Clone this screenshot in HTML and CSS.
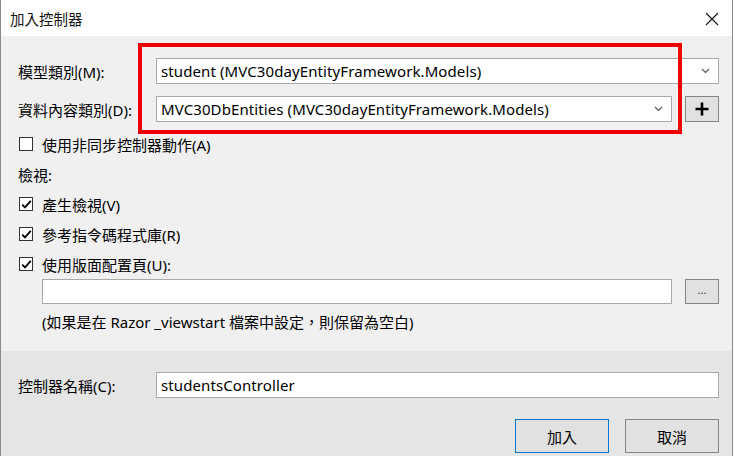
FILE: index.html
```html
<!DOCTYPE html>
<html lang="zh-Hant">
<head>
<meta charset="utf-8">
<title>加入控制器</title>
<link rel="stylesheet" href="styles.css">
</head>
<body>
<div class="window">
  <div class="titlebar">
    <span class="title">加入控制器</span>
    <svg class="close" width="14" height="14" viewBox="0 0 14 14"><path d="M1 1 L13 13 M13 1 L1 13" stroke="#111" stroke-width="1.1" fill="none"/></svg>
  </div>
  <div class="main">
    <div class="row">
      <label class="lbl">模型類別(M):</label>
      <div class="combo wide"><span class="val">student (MVC30dayEntityFramework.Models)</span><svg class="chev" width="9" height="6" viewBox="0 0 9 6"><path d="M1 1 L4.5 4.5 L8 1" stroke="#555" stroke-width="1.1" fill="none"/></svg></div>
    </div>
    <div class="row">
      <label class="lbl">資料內容類別(D):</label>
      <div class="combo narrow"><span class="val">MVC30DbEntities (MVC30dayEntityFramework.Models)</span><svg class="chev" width="9" height="6" viewBox="0 0 9 6"><path d="M1 1 L4.5 4.5 L8 1" stroke="#555" stroke-width="1.1" fill="none"/></svg></div>
      <div class="sqbtn plus"><svg width="14" height="14" viewBox="0 0 14 14"><path d="M7 0.5 V13.5 M0.5 7 H13.5" stroke="#000" stroke-width="2.6" fill="none"/></svg></div>
    </div>
    <div class="checks">
      <div class="crow"><span class="box"></span><span>使用非同步控制器動作(A)</span></div>
      <div class="crow plain"><span>檢視:</span></div>
      <div class="crow"><span class="box checked"><svg width="11" height="11" viewBox="0 0 11 11"><path d="M1.2 5.6 L4 8.4 L9.8 1.8" stroke="#000" stroke-width="1.8" fill="none"/></svg></span><span>產生檢視(V)</span></div>
      <div class="crow"><span class="box checked"><svg width="11" height="11" viewBox="0 0 11 11"><path d="M1.2 5.6 L4 8.4 L9.8 1.8" stroke="#000" stroke-width="1.8" fill="none"/></svg></span><span>參考指令碼程式庫(R)</span></div>
      <div class="crow"><span class="box checked"><svg width="11" height="11" viewBox="0 0 11 11"><path d="M1.2 5.6 L4 8.4 L9.8 1.8" stroke="#000" stroke-width="1.8" fill="none"/></svg></span><span>使用版面配置頁(U):</span></div>
    </div>
    <div class="layoutrow">
      <div class="textbox layout"></div>
      <div class="sqbtn dots">...</div>
    </div>
    <div class="note">(如果是在 Razor _viewstart 檔案中設定，則保留為空白)</div>
    <div class="highlight"></div>
  </div>
  <div class="footer">
    <div class="row">
      <label class="lbl">控制器名稱(C):</label>
      <div class="textbox name"><span class="val">studentsController</span></div>
    </div>
    <div class="buttons">
      <div class="btn default">加入</div>
      <div class="btn">取消</div>
    </div>
  </div>
</div>
</body>
</html>
```

FILE: styles.css
```css
* { box-sizing: border-box; }
html, body { margin: 0; padding: 0; background: #ffffff; }
body {
  font-family: "Noto Sans", "Noto Sans CJK TC", sans-serif;
  font-size: 15px;
  color: #000;
}
.window {
  width: 733px;
  height: 456px;
  border-left: 1px solid #8a8a8a;
  border-right: 1px solid #8a8a8a;
  display: flex;
  flex-direction: column;
  overflow: hidden;
}
.titlebar {
  height: 36px;
  background: #fff;
  display: flex;
  align-items: center;
  justify-content: space-between;
  padding: 0 13px 0 9px;
}
.title { font-family: "Noto Sans CJK TC", sans-serif; font-size: 14.5px; color: #111; }
.close { margin-top: 1px; }
.main {
  position: relative;
  height: 315px;
  background: #f0f0f0;
  padding: 22px 13px 0 17px;
  display: flex;
  flex-direction: column;
}
.row { display: flex; align-items: center; height: 26px; }
.row + .row { margin-top: 12px; }
.lbl { width: 138px; flex: none; font-size: 15px; }
.combo, .textbox {
  height: 26px;
  background: #fff;
  border: 1px solid #a9a9a9;
  display: flex;
  align-items: center;
  padding-left: 4px;
}
.combo.wide { width: 563px; }
.combo.narrow { width: 517px; }
.val { flex: 1; white-space: nowrap; font-size: 15px; letter-spacing: 0.1px; }
.chev { margin-right: 8px; }
.sqbtn {
  width: 34px;
  height: 26px;
  margin-left: 13px;
  background: #e1e1e1;
  border: 1px solid #858585;
  display: flex;
  align-items: center;
  justify-content: center;
}
.checks { margin-top: 7px; display: flex; flex-direction: column; }
.crow { height: 30px; display: flex; align-items: center; gap: 9px; padding-left: 1px; }
.crow.plain { padding-left: 0; }
.box {
  width: 14px;
  height: 14px;
  border: 1px solid #333;
  background: #fff;
  display: flex;
  align-items: center;
  justify-content: center;
  flex: none;
}
.layoutrow { display: flex; height: 25px; padding-left: 24px; }
.textbox.layout { width: 631px; height: 25px; }
.sqbtn.dots { height: 25px; font-size: 11px; color: #333; padding-bottom: 4px; letter-spacing: 0; }
.note { margin-top: 8px; height: 20px; line-height: 20px; padding-left: 24px; }
.highlight {
  position: absolute;
  left: 137px;
  top: 7px;
  width: 544px;
  height: 91px;
  border: 4px solid #ee0000;
  pointer-events: none;
}
.footer {
  flex: 1;
  background: #e5e5e5;
  padding: 21px 13px 0 17px;
}
.textbox.name { width: 563px; height: 26px; }
.buttons { display: flex; justify-content: flex-end; gap: 16px; margin-top: 21px; }
.btn {
  width: 94px;
  height: 34px;
  background: #e1e1e1;
  border: 1px solid #858585;
  display: flex;
  align-items: center;
  justify-content: center;
  font-family: "Noto Sans CJK TC", sans-serif;
  font-size: 15px;
}
.btn.default { border-color: #0078d7; }
```
